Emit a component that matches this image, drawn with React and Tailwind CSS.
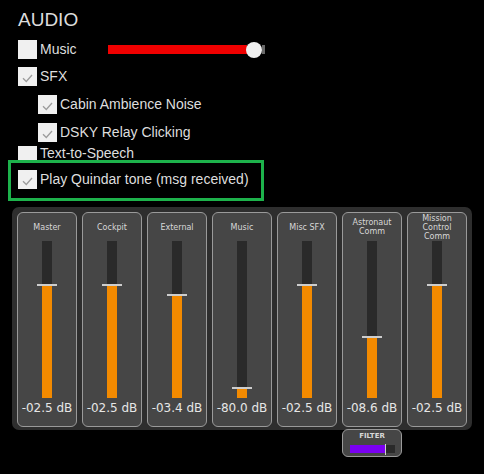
import React from 'react';

const channels = [
  { label: ['Master'], value: '-02.5 dB', fill: 113 },
  { label: ['Cockpit'], value: '-02.5 dB', fill: 113 },
  { label: ['External'], value: '-03.4 dB', fill: 103 },
  { label: ['Music'], value: '-80.0 dB', fill: 10 },
  { label: ['Misc SFX'], value: '-02.5 dB', fill: 113 },
  { label: ['Astronaut', 'Comm'], value: '-08.6 dB', fill: 61 },
  { label: ['Mission', 'Control', 'Comm'], value: '-02.5 dB', fill: 113 },
];

function Checkbox({ checked }) {
  return (
    <div className="w-[19px] h-[19px] shrink-0 bg-[#f0f0f0]">
      {checked && (
        <svg width="19" height="19" viewBox="0 0 19 19">
          <path d="M5 11.2 L8.3 14.5 L14 8" fill="none" stroke="#9c9c9c" strokeWidth="1.3" />
        </svg>
      )}
    </div>
  );
}

function Row({ checked, label, className = '', labelClass = '-translate-y-[1px]', children }) {
  return (
    <div className={`flex items-center h-[19px] ${className}`}>
      <Checkbox checked={checked} />
      <span className={`ml-[3px] text-[14px] leading-[16px] text-[#dedede] whitespace-nowrap ${labelClass}`}>
        {label}
      </span>
      {children}
    </div>
  );
}

function Channel({ label, value, fill }) {
  return (
    <div className="w-[60px] h-[215px] flex flex-col bg-[#464646] border border-[#9a9a9a] rounded-[6px]">
      <div className="h-[28px] flex flex-col items-center justify-center text-[8px] leading-[9px] text-[#d8d8d8]">
        {label.map((l) => (
          <span key={l}>{l}</span>
        ))}
      </div>
      <div className="relative mx-auto w-[10px] h-[157px] bg-[#2a2a2a]">
        <div className="absolute bottom-0 left-0 w-full bg-[#f38a00]" style={{ height: fill }} />
        <div
          className="absolute left-[-5px] w-[20px] h-[2px] bg-[#cdcdcd]"
          style={{ bottom: fill - 1 }}
        />
      </div>
      <div className="mt-[3px] text-center text-[12px] leading-[14px] text-[#e6e6e6]">{value}</div>
    </div>
  );
}

export default function App() {
  return (
    <div className="relative w-[484px] h-[474px] bg-black overflow-hidden" style={{ fontFamily: '"Liberation Sans", Arial, sans-serif' }}>
      <div className="pl-[18px] pt-[10px]">
        <div className="text-[19px] leading-[19px] text-[#dcdcdc]">AUDIO</div>

        <Row checked={false} label="Music" className="mt-[11px]" labelClass="-translate-y-[1px] w-[68px]">
          <div className="flex items-center">
            <div className="w-[139px] h-[9px] bg-[#f00000]" />
            <div className="relative z-10 -ml-[1px] w-[16px] h-[16px] rounded-full bg-[#f0f0f0]" />
            <div className="w-[3px] h-[9px] bg-[#6a6a6a]" />
          </div>
        </Row>
        <Row checked label="SFX" className="mt-[8px]" />
        <Row checked label="Cabin Ambience Noise" className="mt-[9px] ml-[20px]" />
        <Row checked label="DSKY Relay Clicking" className="mt-[9px] ml-[20px]" />
        <Row checked={false} label="Text-to-Speech" className="mt-[4px]" labelClass="-translate-y-[3px]" />
      </div>

      <div className="relative z-10 -mt-[5px] ml-[8px] w-[256px] h-[41px] bg-black border-[3px] border-[#1db24b] pl-[7px] pt-[7px]">
        <Row checked label="Play Quindar tone (msg received)" />
      </div>

      <div
        className="mt-[6px] ml-[12px] w-[460px] h-[223px] bg-[#2e2e2e] rounded-[7px] pl-[5px] pt-[5px] flex gap-[5px]"
        style={{ fontFamily: '"DejaVu Sans", sans-serif' }}
      >
        {channels.map((c) => (
          <Channel key={c.label.join(' ')} {...c} />
        ))}
      </div>

      <div
        className="absolute left-[342px] top-[429px] w-[60px] h-[28px] bg-[#464646] border border-[#9a9a9a] rounded-[6px] flex flex-col items-center"
        style={{ fontFamily: '"DejaVu Sans", sans-serif' }}
      >
        <div className="mt-[2px] text-[7px] leading-[9px] font-bold text-[#d8d8d8]">FILTER</div>
        <div className="mt-[4px] flex items-center w-[45px] h-[8px] bg-[#2a2a2a]">
          <div className="w-[35px] h-[8px] bg-[#7a00f2]" />
          <div className="w-[1px] h-[11px] bg-[#d0d0d0]" />
        </div>
      </div>
    </div>
  );
}
